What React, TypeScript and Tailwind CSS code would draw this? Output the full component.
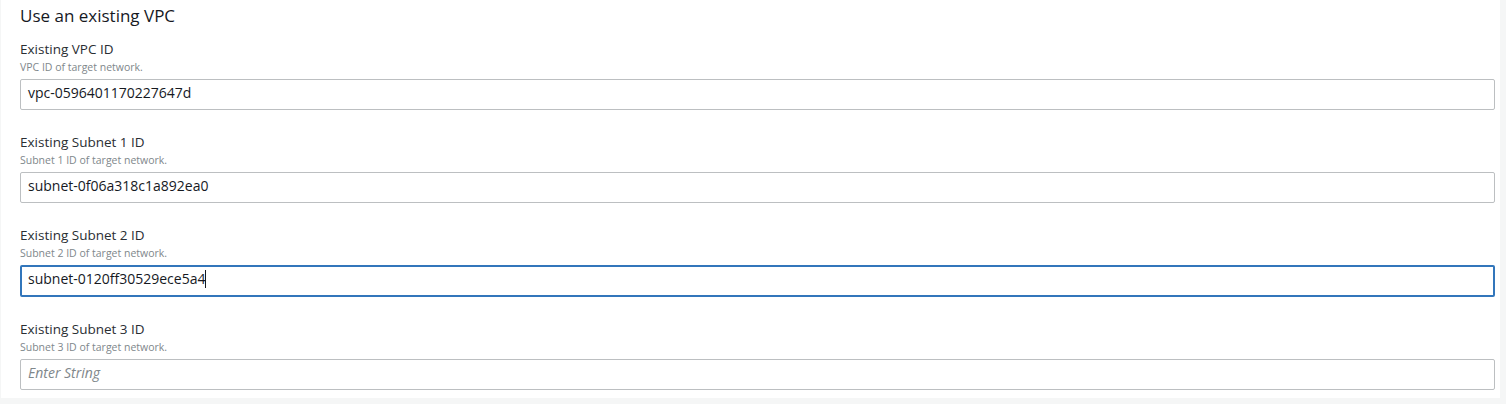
const fields = [
  { label: "Existing VPC ID", desc: "VPC ID of target network.", value: "vpc-0596401170227647d" },
  { label: "Existing Subnet 1 ID", desc: "Subnet 1 ID of target network.", value: "subnet-0f06a318c1a892ea0" },
  { label: "Existing Subnet 2 ID", desc: "Subnet 2 ID of target network.", value: "subnet-0120ff30529ece5a4", focused: true },
  { label: "Existing Subnet 3 ID", desc: "Subnet 3 ID of target network.", value: "" },
];

const Field = ({ label, desc, value, focused }: { label: string; desc: string; value: string; focused?: boolean }) => {
  return (
    <div className="flex flex-col">
      <div className="h-[18px] text-[13.5px] leading-[18px] text-[#2a2e33]">{label}</div>
      <div className="h-[14px] text-[10.5px] leading-[14px] text-[#80878b] mt-[2px] mb-[5px]">{desc}</div>
      {focused ? (
        <div className="h-[32px] border-2 border-[#3276bb] rounded-[2px] flex pl-[6px] pt-[2px] leading-[20px] text-[14px] text-[#16191f]">
          {value}
          <span className="w-px h-[18px] mt-[1px] bg-[#16191f]" />
        </div>
      ) : (
        <div className="h-[31px] border border-[#bcbfc1] rounded-[2px] flex pl-[7px] pt-[3px] leading-[20px] text-[14px] text-[#16191f]">
          {value ? value : <span className="italic text-[#80878b]">Enter String</span>}
        </div>
      )}
    </div>
  );
};

export default function App() {
  return (
    <div className="w-[1506px] h-[404px] bg-[#f5f6f6] overflow-hidden" style={{ fontFamily: '"Open Sans", "Noto Sans", sans-serif' }}>
      <div className="h-[398px] ml-[1px] mr-[6px] bg-white pl-[19px] pr-[5px] pt-[5px]">
        <div className="h-[22px] text-[17px] leading-[22px] text-[#16191f] mb-[13px]">Use an existing VPC</div>
        <div className="flex flex-col gap-[23px]">
          {fields.map((f) => (
            <Field key={f.label} {...f} />
          ))}
        </div>
      </div>
    </div>
  );
}
